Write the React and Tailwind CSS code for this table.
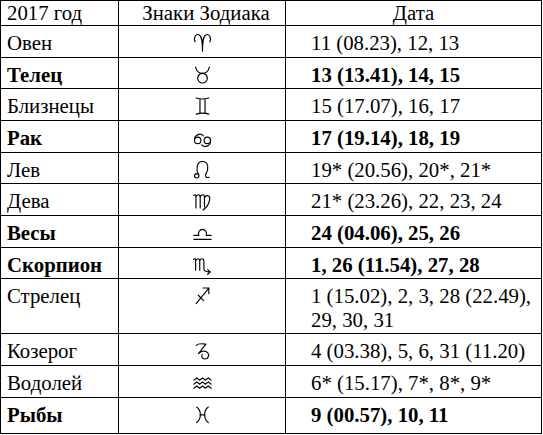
const ln = {
    fill: "none",
    stroke: "#000",
    strokeWidth: 1,
    strokeLinecap: "round",
    strokeLinejoin: "round",
};

function Glyph({ children }) {
    return (
        <svg width="23" height="23" viewBox="0 0 20 20" className="block">
            <g {...ln}>{children}</g>
        </svg>
    );
}

const signs = {
    aries: (
        <Glyph>
            <path d="M3.5 9.5 C2 5 4.5 2.5 6.8 3.2 C9 4 10 7 10 17.5 M16.5 9.5 C18 5 15.5 2.5 13.2 3.2 C11 4 10 7 10 17.5" />
        </Glyph>
    ),
    taurus: (
        <Glyph>
            <path d="M4 3.5 C5 7.5 7.5 9 10 9 C12.5 9 15 7.5 16 3.5" />
            <circle cx="10" cy="13.2" r="4.2" />
        </Glyph>
    ),
    gemini: (
        <Glyph>
            <path d="M4.5 3.5 Q10 5.2 15.5 3.5 M4.5 17.5 Q10 15.8 15.5 17.5 M7.8 4.5 L7.8 16.5 M12.2 4.5 L12.2 16.5" />
        </Glyph>
    ),
    cancer: (
        <Glyph>
            <circle cx="5.8" cy="12.5" r="2.8" />
            <path d="M3 12.5 C3 7 8.5 6 10.8 8.5" />
            <circle cx="14.2" cy="12.5" r="2.8" />
            <path d="M17 12.5 C17 18 11.5 19 9.2 16.5" />
        </Glyph>
    ),
    leo: (
        <Glyph>
            <circle cx="5" cy="15.5" r="1.9" />
            <path d="M6.5 14.2 C4.3 10.5 4.6 3 10 3 C15.4 3 15.6 9.5 13 13.8 C12 15.8 13 17.6 15.8 16.7" />
        </Glyph>
    ),
    virgo: (
        <Glyph>
            <path d="M2.3 5.5 C3.3 4.5 4.3 5 4.3 6.5 L4.3 16.5 M4.3 7 C4.8 4.3 8 4.3 8 7 L8 16.5 M8 7 C8.5 4.3 11.7 4.3 11.7 7 L11.7 15.5 M11.7 8 C12.7 4.8 16.8 4.8 16.3 9 C15.8 12.5 13.8 15.8 10.5 18.3" />
        </Glyph>
    ),
    libra: (
        <Glyph>
            <path d="M2.5 16 L17.5 16 M2.5 12.5 L6.8 12.5 C5.8 9.8 7.5 7.3 10 7.3 C12.5 7.3 14.2 9.8 13.2 12.5 L17.5 12.5" />
        </Glyph>
    ),
    scorpio: (
        <Glyph>
            <path d="M2.2 5.5 C3.2 4.5 4 5 4 6.5 L4 15 M4 7 C4.5 4.3 7.6 4.3 7.6 7 L7.6 15 M7.6 7 C8.1 4.3 11.2 4.3 11.2 7 L11.2 14 C11.2 16 12.5 16.5 16.5 16.5 M14.5 14.5 L16.7 16.5 L14.5 18.5" />
        </Glyph>
    ),
    sagittarius: (
        <Glyph>
            <path d="M4.5 17 L15.5 3.5 M10.5 3.5 L15.5 3.5 L15.5 8.5 M6.3 9.8 L11 14.5" />
        </Glyph>
    ),
    capricorn: (
        <Glyph>
            <path d="M4.5 5.5 C6.5 3.5 9.5 4 13 4.5 L6.5 12.8 C8.5 10.3 12.5 9.8 14.6 12 C16.3 14 15 17.4 12 17.4 C9.5 17.4 8.8 15.3 9.8 13.5" />
        </Glyph>
    ),
    aquarius: (
        <Glyph>
            <path d="M2.5 8 L5 6 L7.5 8 L10 6 L12.5 8 L15 6 L17.5 8 M2.5 11.5 L5 9.5 L7.5 11.5 L10 9.5 L12.5 11.5 L15 9.5 L17.5 11.5 M2.5 15 L5 13 L7.5 15 L10 13 L12.5 15 L15 13 L17.5 15" />
        </Glyph>
    ),
    pisces: (
        <Glyph>
            <path d="M5 3.5 C9.2 6.8 9.2 13.5 5 17 M15 3.5 C10.8 6.8 10.8 13.5 15 17 M7.8 10.3 L12.2 10.3" />
        </Glyph>
    ),
};

const rows = [
    { name: "Овен", sign: "aries", date: "11 (08.23), 12, 13", h: "h-[32px]" },
    { name: "Телец", sign: "taurus", date: "13 (13.41), 14, 15", h: "h-[31px]", bold: true },
    { name: "Близнецы", sign: "gemini", date: "15 (17.07), 16, 17", h: "h-[32px]" },
    { name: "Рак", sign: "cancer", date: "17 (19.14), 18, 19", h: "h-[32px]", bold: true },
    { name: "Лев", sign: "leo", date: "19* (20.56), 20*, 21*", h: "h-[31px]" },
    { name: "Дева", sign: "virgo", date: "21* (23.26), 22, 23, 24", h: "h-[32px]" },
    { name: "Весы", sign: "libra", date: "24 (04.06), 25, 26", h: "h-[32px]", bold: true },
    { name: "Скорпион", sign: "scorpio", date: "1, 26 (11.54), 27, 28", h: "h-[31px]", bold: true },
    {
        name: "Стрелец",
        sign: "sagittarius",
        date: (
            <>
                1 (15.02), 2, 3, 28 (22.49),
                <br />
                29, 30, 31
            </>
        ),
        h: "h-[55px]",
    },
    { name: "Козерог", sign: "capricorn", date: "4 (03.38), 5, 6, 31 (11.20)", h: "h-[32px]" },
    { name: "Водолей", sign: "aquarius", date: "6* (15.17), 7*, 8*, 9*", h: "h-[32px]" },
    { name: "Рыбы", sign: "pisces", date: "9 (00.57), 10, 11", h: "h-[36px]", bold: true },
];

export default function App() {
    return (
        <div className="min-h-screen bg-white">
            <div
                className="w-[542px] border-x border-b border-black text-[20.8px] leading-[24px] text-black"
                style={{ fontFamily: '"Liberation Serif", "Times New Roman", serif' }}
            >
                <div className="flex h-[25px] border-t border-black">
                    <div className="w-[117px] pl-[6px]">2017 год</div>
                    <div className="w-[167px] border-l border-black text-center pl-[8px]">
                        Знаки Зодиака
                    </div>
                    <div className="flex-1 border-l border-black text-center">Дата</div>
                </div>

                {rows.map((r) => (
                    <div
                        key={r.name}
                        className={`flex border-t border-black ${r.h} ${r.bold ? "font-bold" : ""}`}
                    >
                        <div className="w-[117px] pl-[6px] pt-[5px]">{r.name}</div>
                        <div className="w-[167px] border-l border-black flex justify-center pt-[5px]">
                            {signs[r.sign]}
                        </div>
                        <div className="flex-1 border-l border-black pl-[25px] pt-[5px]">
                            {r.date}
                        </div>
                    </div>
                ))}
            </div>
        </div>
    );
}
